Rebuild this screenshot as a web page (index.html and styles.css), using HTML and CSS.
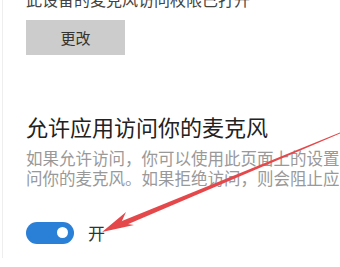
FILE: index.html
```html
<!DOCTYPE html>
<html>
    <head>
        <meta charset="utf-8">
        <title>麦克风</title>
        <link rel="stylesheet" href="styles.css">
    </head>
    <body>
        <div class="panel">
            <div class="status">此设备的麦克风访问权限已打开</div>
            <button class="change-btn">更改</button>
            <h2 class="title">允许应用访问你的麦克风</h2>
            <p class="desc">如果允许访问，你可以使用此页面上的设置<br>问你的麦克风。如果拒绝访问，则会阻止应</p>
            <div class="toggle-row">
                <span class="toggle"><span class="knob"></span></span>
                <span class="toggle-label">开</span>
            </div>
        </div>
        <svg class="arrow" width="340" height="267" viewBox="0 0 340 267">
            <polygon points="340,132.6 340,133.6 119,228 117,223" fill="#e5484b"/>
            <polygon points="102,232 126,212 121,223 134,225" fill="#e5484b"/>
        </svg>
    </body>
</html>
```

FILE: styles.css
```css
body {
    margin: 0;
    background: #fff;
    overflow: hidden;
    font-family: "Noto Sans CJK SC", "Microsoft YaHei", sans-serif;
}
.panel {
    border-left: 1px solid #eee;
    margin-left: 2px;
    padding-left: 23px;
    height: 258px;
    white-space: nowrap;
    overflow: hidden;
}
.status {
    font-size: 16px;
    line-height: 20px;
    color: #444;
    margin-top: -11px;
}
.change-btn {
    display: block;
    margin-top: 11px;
    width: 99px;
    height: 35px;
    border: none;
    background: #cccccc;
    color: #333;
    font-family: inherit;
    font-size: 15px;
    padding: 0;
}
.title {
    margin: 56px 0 0;
    font-size: 22px;
    line-height: 30px;
    font-weight: normal;
    color: #222;
}
.desc {
    margin: 7px 0 0;
    font-size: 16.5px;
    line-height: 20px;
    color: #999;
}
.toggle-row {
    display: flex;
    align-items: center;
    gap: 14px;
    margin-top: 32px;
}
.toggle {
    width: 48px;
    height: 22px;
    border-radius: 11px;
    background: #2a7fd6;
    display: flex;
    justify-content: flex-end;
    align-items: center;
    padding-right: 6px;
    box-sizing: border-box;
}
.knob {
    width: 11px;
    height: 11px;
    border-radius: 50%;
    background: #fff;
}
.toggle-label {
    font-size: 17px;
    color: #333;
}
.arrow {
    position: absolute;
    left: 0;
    top: 0;
}
```
